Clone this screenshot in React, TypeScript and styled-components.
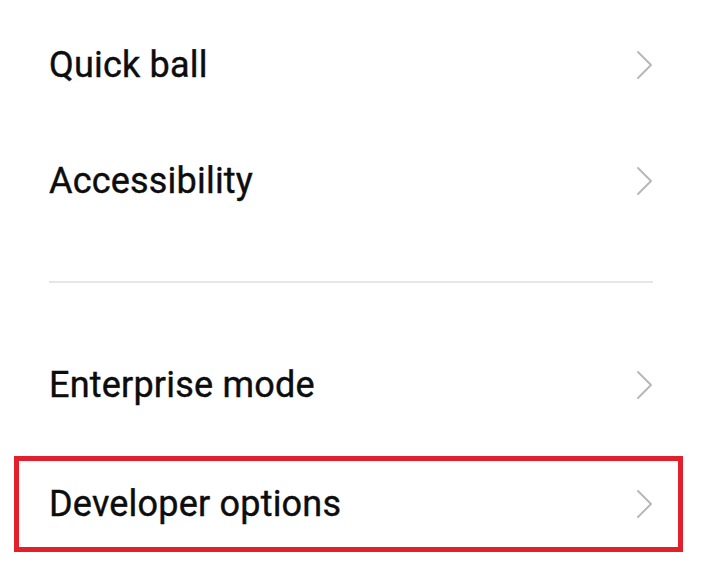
import React from "react";
import styled, { createGlobalStyle } from "styled-components";

const Global = createGlobalStyle`
  html, body { margin: 0; padding: 0; background: #ffffff; }
  body { font-family: Roboto, "Noto Sans", sans-serif; }
`;

const Page = styled.div`
  width: 702px;
  height: 576px;
  background: #ffffff;
  display: flex;
  flex-direction: column;
  padding-top: 7px;
  box-sizing: border-box;
  overflow: hidden;
`;

const Row = styled.div`
  height: 116px;
  display: flex;
  align-items: center;
  justify-content: space-between;
  padding: 0 48px 0 49px;
  box-sizing: border-box;
`;

const Label = styled.span`
  font-family: Roboto, "Noto Sans", sans-serif;
  font-size: 36px;
  font-weight: 400;
  color: #0d0d0d;
  letter-spacing: 0.2px;
  -webkit-text-stroke: 0.4px #0d0d0d;
`;

const Divider = styled.div`
  height: 2px;
  background: #e6e6e6;
  margin: 42px 49px 44px 49px;
`;

const Highlight = styled.div`
  height: 96px;
  margin: 13px 19px 0 14px;
  border: 5px solid #e21f2a;
  box-sizing: border-box;
  display: flex;
  align-items: center;
  justify-content: space-between;
  padding: 0 24px 0 30px;
`;

const Chevron = () => (
  <svg width="18" height="30" viewBox="0 0 18 30" fill="none">
    <path d="M2 2 L15 15 L2 28" stroke="#b8b8b8" strokeWidth="2" strokeLinecap="round" strokeLinejoin="round" />
  </svg>
);

export default function App() {
  return (
    <>
      <Global />
      <Page>
        <Row>
          <Label>Quick ball</Label>
          <Chevron />
        </Row>
        <Row>
          <Label>Accessibility</Label>
          <Chevron />
        </Row>
        <Divider />
        <Row>
          <Label>Enterprise mode</Label>
          <Chevron />
        </Row>
        <Highlight>
          <Label>Developer options</Label>
          <Chevron />
        </Highlight>
      </Page>
    </>
  );
}
